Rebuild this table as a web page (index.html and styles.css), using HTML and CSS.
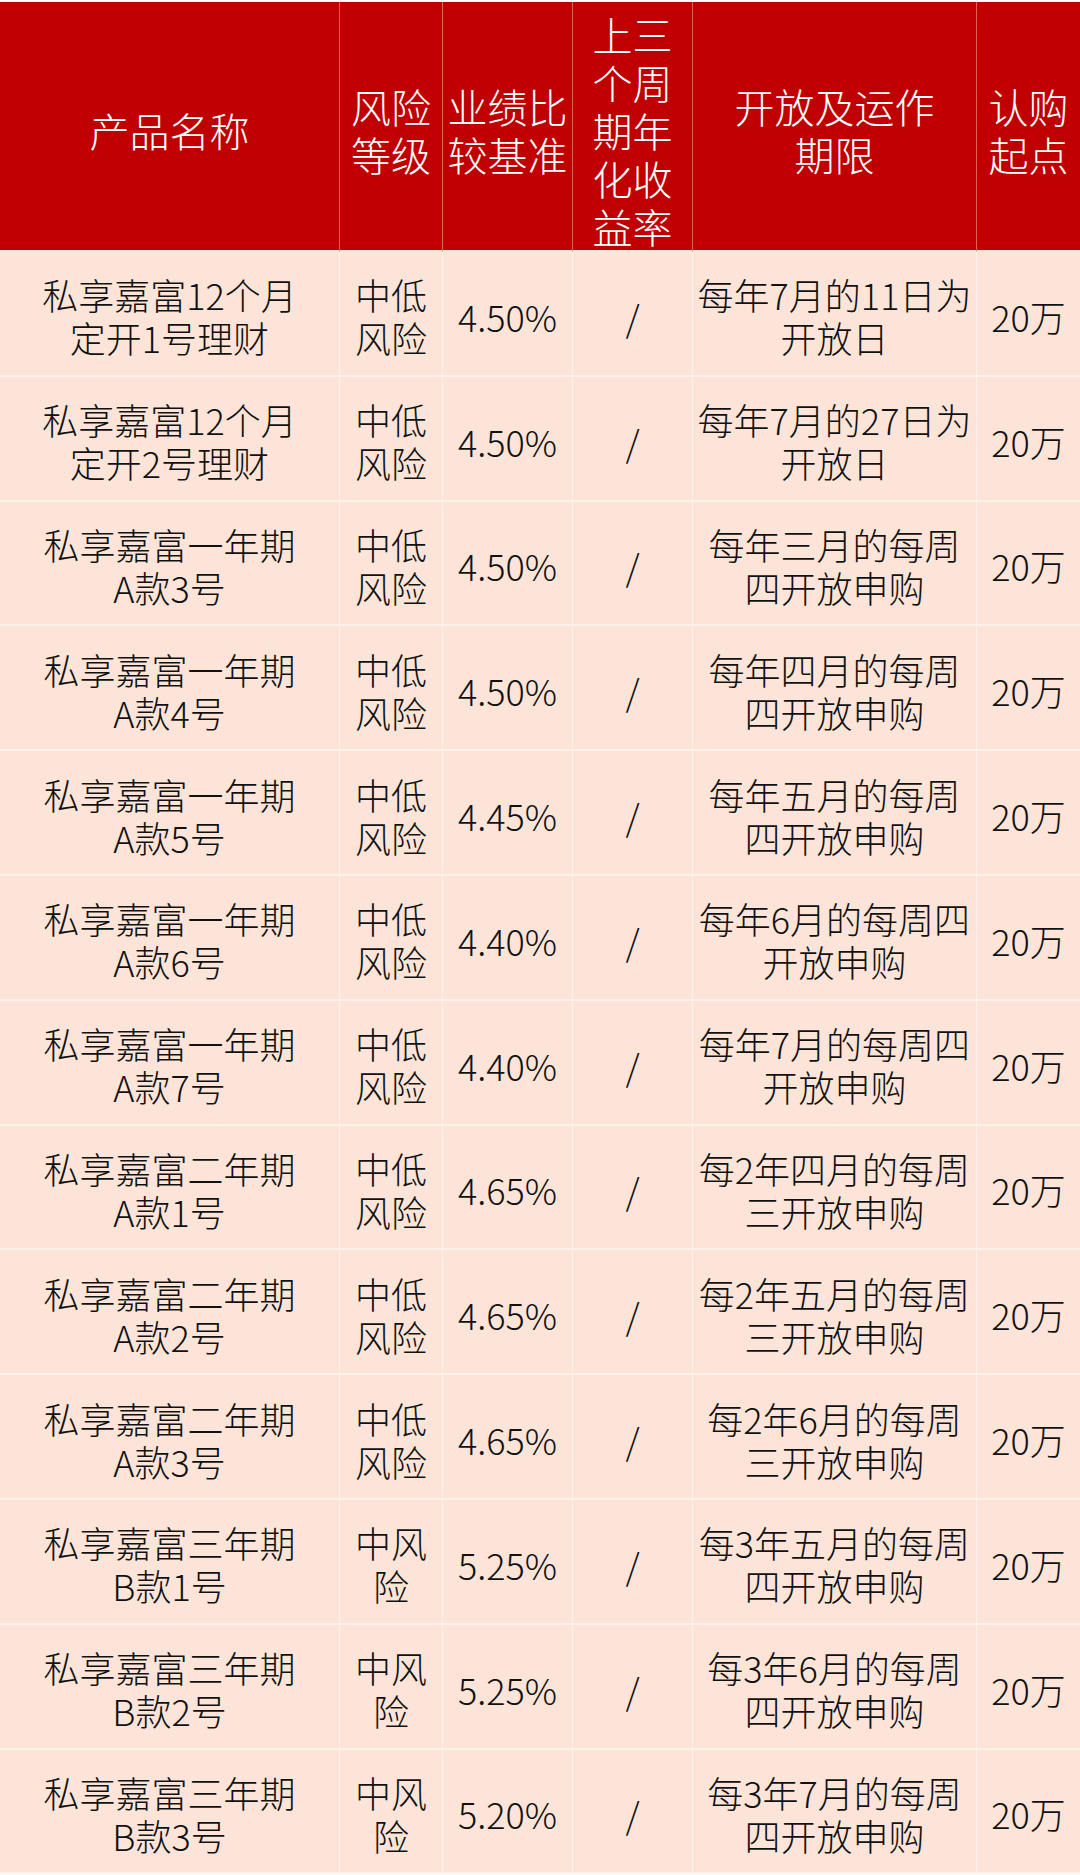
FILE: index.html
```html
<!DOCTYPE html>
<html lang="zh-CN">
<head>
<meta charset="utf-8">
<title>产品列表</title>
<link rel="stylesheet" href="styles.css">
</head>
<body>
<div class="sheet">
  <div class="grid">
    <div class="cell head">产品名称</div>
    <div class="cell head">风险<br>等级</div>
    <div class="cell head">业绩比<br>较基准</div>
    <div class="cell head">上三<br>个周<br>期年<br>化收<br>益率</div>
    <div class="cell head">开放及运作<br>期限</div>
    <div class="cell head last">认购<br>起点</div>

    <div class="cell">私享嘉富12个月<br>定开1号理财</div>
    <div class="cell">中低<br>风险</div>
    <div class="cell">4.50%</div>
    <div class="cell">/</div>
    <div class="cell">每年7月的11日为<br>开放日</div>
    <div class="cell last">20万</div>

    <div class="cell">私享嘉富12个月<br>定开2号理财</div>
    <div class="cell">中低<br>风险</div>
    <div class="cell">4.50%</div>
    <div class="cell">/</div>
    <div class="cell">每年7月的27日为<br>开放日</div>
    <div class="cell last">20万</div>

    <div class="cell">私享嘉富一年期<br>A款3号</div>
    <div class="cell">中低<br>风险</div>
    <div class="cell">4.50%</div>
    <div class="cell">/</div>
    <div class="cell">每年三月的每周<br>四开放申购</div>
    <div class="cell last">20万</div>

    <div class="cell">私享嘉富一年期<br>A款4号</div>
    <div class="cell">中低<br>风险</div>
    <div class="cell">4.50%</div>
    <div class="cell">/</div>
    <div class="cell">每年四月的每周<br>四开放申购</div>
    <div class="cell last">20万</div>

    <div class="cell">私享嘉富一年期<br>A款5号</div>
    <div class="cell">中低<br>风险</div>
    <div class="cell">4.45%</div>
    <div class="cell">/</div>
    <div class="cell">每年五月的每周<br>四开放申购</div>
    <div class="cell last">20万</div>

    <div class="cell">私享嘉富一年期<br>A款6号</div>
    <div class="cell">中低<br>风险</div>
    <div class="cell">4.40%</div>
    <div class="cell">/</div>
    <div class="cell">每年6月的每周四<br>开放申购</div>
    <div class="cell last">20万</div>

    <div class="cell">私享嘉富一年期<br>A款7号</div>
    <div class="cell">中低<br>风险</div>
    <div class="cell">4.40%</div>
    <div class="cell">/</div>
    <div class="cell">每年7月的每周四<br>开放申购</div>
    <div class="cell last">20万</div>

    <div class="cell">私享嘉富二年期<br>A款1号</div>
    <div class="cell">中低<br>风险</div>
    <div class="cell">4.65%</div>
    <div class="cell">/</div>
    <div class="cell">每2年四月的每周<br>三开放申购</div>
    <div class="cell last">20万</div>

    <div class="cell">私享嘉富二年期<br>A款2号</div>
    <div class="cell">中低<br>风险</div>
    <div class="cell">4.65%</div>
    <div class="cell">/</div>
    <div class="cell">每2年五月的每周<br>三开放申购</div>
    <div class="cell last">20万</div>

    <div class="cell">私享嘉富二年期<br>A款3号</div>
    <div class="cell">中低<br>风险</div>
    <div class="cell">4.65%</div>
    <div class="cell">/</div>
    <div class="cell">每2年6月的每周<br>三开放申购</div>
    <div class="cell last">20万</div>

    <div class="cell">私享嘉富三年期<br>B款1号</div>
    <div class="cell">中风<br>险</div>
    <div class="cell">5.25%</div>
    <div class="cell">/</div>
    <div class="cell">每3年五月的每周<br>四开放申购</div>
    <div class="cell last">20万</div>

    <div class="cell">私享嘉富三年期<br>B款2号</div>
    <div class="cell">中风<br>险</div>
    <div class="cell">5.25%</div>
    <div class="cell">/</div>
    <div class="cell">每3年6月的每周<br>四开放申购</div>
    <div class="cell last">20万</div>

    <div class="cell">私享嘉富三年期<br>B款3号</div>
    <div class="cell">中风<br>险</div>
    <div class="cell">5.20%</div>
    <div class="cell">/</div>
    <div class="cell">每3年7月的每周<br>四开放申购</div>
    <div class="cell last">20万</div>
  </div>
</div>
</body>
</html>
```

FILE: styles.css
```css
html, body {
  margin: 0;
  padding: 0;
  background: #ffffff;
}

.sheet {
  width: 1080px;
  padding-top: 2px;
}

.grid {
  display: grid;
  grid-template-columns: 340px 103px 130px 120px 284px 103px;
  grid-template-rows: 250px repeat(13, 124.8px);
  background: #fce5d8;
  font-family: "Noto Sans CJK SC", "Noto Sans", sans-serif;
  font-weight: 300;
}

.cell {
  box-sizing: border-box;
  display: flex;
  align-items: center;
  justify-content: center;
  text-align: center;
  font-size: 36px;
  line-height: 43px;
  color: #111111;
  background: #fce5d8;
  border-right: 1px solid #fdf1ea;
  border-bottom: 2px solid #fdf1ea;
  padding-top: 6px;
}

.cell.last {
  border-right: none;
}

.cell.head {
  background: #c00000;
  color: #ffffff;
  font-size: 40px;
  line-height: 48px;
  border-right: 1px solid #e2605c;
  border-bottom: 2px solid #fbe2dc;
  padding-top: 8px;
}

.cell.head.last {
  border-right: none;
}
```
